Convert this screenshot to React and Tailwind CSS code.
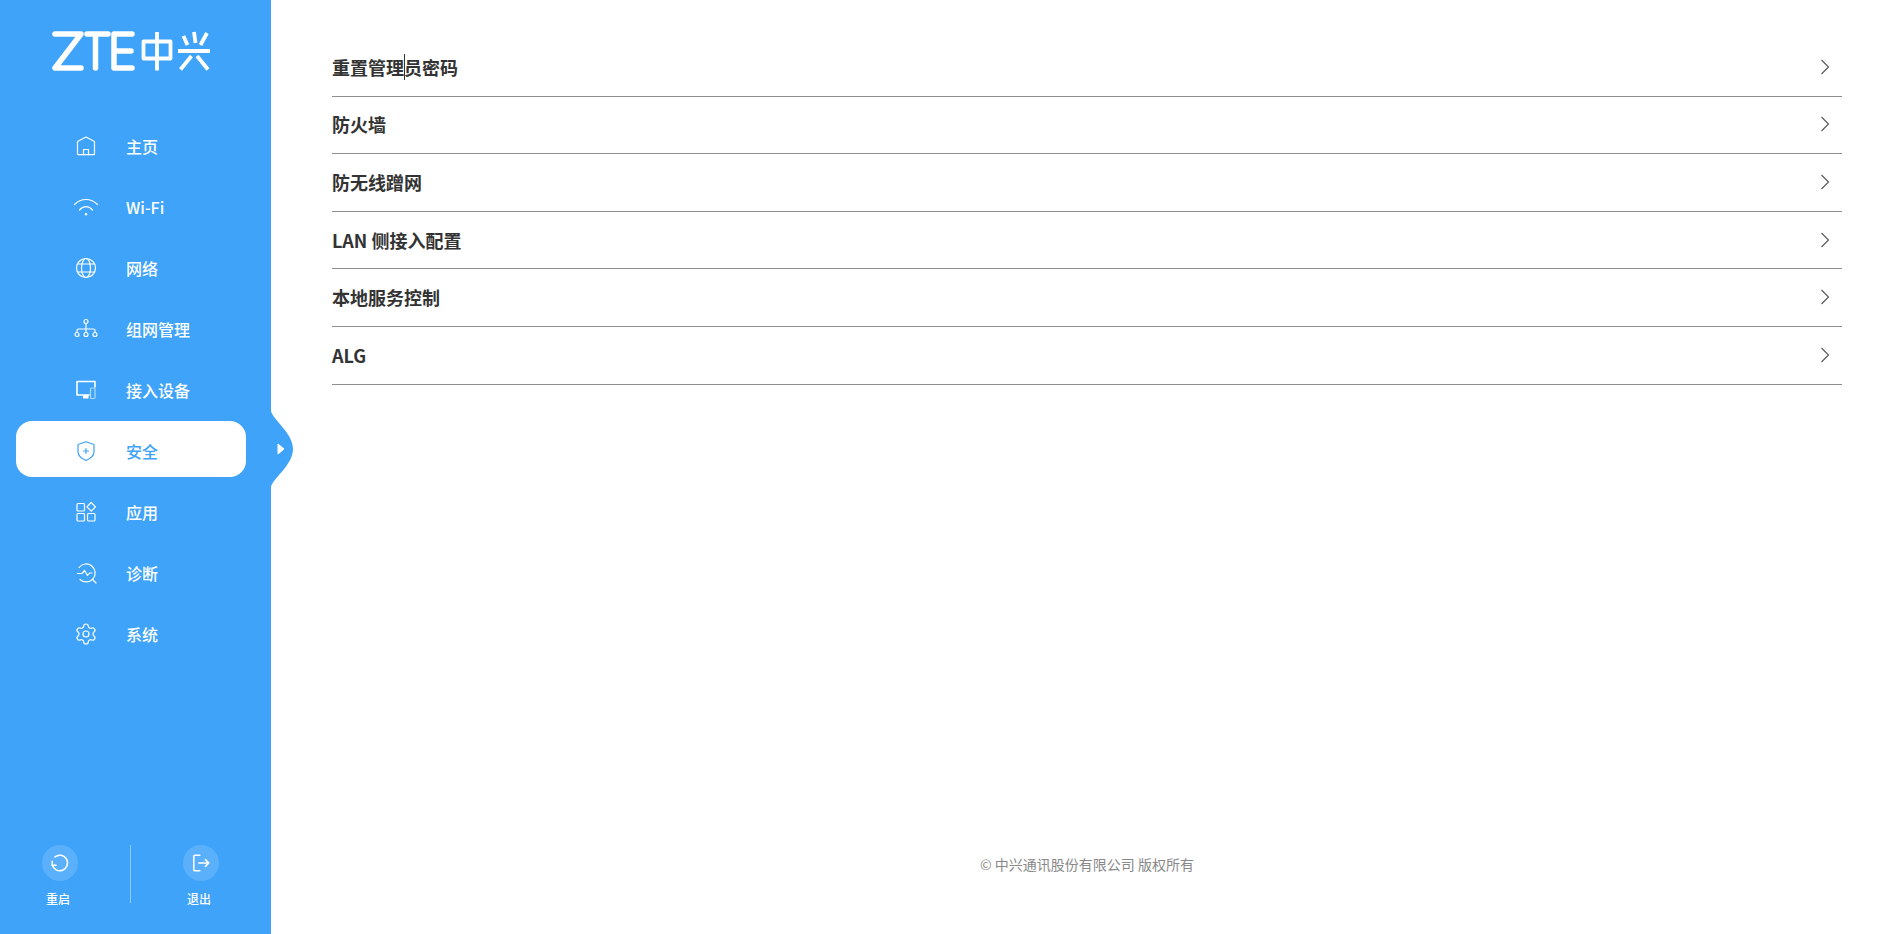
import React from 'react';
import { Settings } from 'lucide-react';

const FONT = "font-['Noto_Sans_CJK_SC','Noto_Sans',sans-serif]";

// nav icons, drawn on a 24 box
const Icon = ({ children, className = '' }) => (
    <svg width="24" height="24" viewBox="0 0 24 24" fill="none" stroke="currentColor" strokeWidth="1.2" strokeLinecap="round" strokeLinejoin="round" className={className}>
        {children}
    </svg>
);

const navItems = [
    {
        label: '主页',
        icon: (
            <Icon>
                <path d="M3.500 7.500 12 3l8.500 4.500v12.200a1 1 0 0 1-1 1h-15a1 1 0 0 1-1-1z" />
                <path d="M9.500 20.700v-5.200h5v5.200" />
            </Icon>
        ),
    },
    {
        label: 'Wi-Fi',
        icon: (
            <Icon>
                <path d="M.5 9.500C7 2.800 17 2.800 23.500 9.500" />
                <path d="M5.500 15c3.700-4.500 9.300-4.500 13 0" />
                <circle cx="12" cy="19.300" r="1.200" fill="currentColor" stroke="none" />
            </Icon>
        ),
    },
    {
        label: '网络',
        icon: (
            <Icon>
                <circle cx="12" cy="12" r="9.500" />
                <ellipse cx="12" cy="12" rx="4.500" ry="9.500" />
                <path d="M3.500 8h17M3.500 16h17" />
            </Icon>
        ),
    },
    {
        label: '组网管理',
        icon: (
            <Icon>
                <circle cx="12" cy="4.500" r="2" />
                <circle cx="3" cy="17.500" r="2" />
                <circle cx="12" cy="17.500" r="2" />
                <circle cx="21" cy="17.500" r="2" />
                <path d="M12 6.500v9M3 15.500v-2a1.500 1.500 0 0 1 1.500-1.500h15a1.500 1.500 0 0 1 1.500 1.500v2" />
            </Icon>
        ),
    },
    {
        label: '接入设备',
        icon: (
            <Icon>
                <path d="M15 17H3V3.500h18V9" strokeWidth="1.600" />
                <path d="M9 20.500h5.500V17H9z" fill="currentColor" stroke="none" />
                <rect x="16.500" y="10" width="4.500" height="10.500" rx="1" opacity="0.6" />
            </Icon>
        ),
    },
    {
        label: '安全',
        active: true,
        icon: (
            <Icon>
                <path d="M12 2.800 20 5.500v7.500c0 4-3.500 6.500-8 8.500-4.500-2-8-4.500-8-8.500V5.500z" />
                <path d="M12 9.500v5M9.500 12h5" />
            </Icon>
        ),
    },
    {
        label: '应用',
        icon: (
            <Icon>
                <rect x="3" y="3.500" width="7.500" height="7.500" rx="1" />
                <rect x="3" y="13.500" width="7.500" height="7.500" rx="1" />
                <rect x="13.500" y="13.500" width="7.500" height="7.500" rx="1" />
                <path d="M17.200 2.500 21.500 6.800 17.200 11.100 12.900 6.800z" />
            </Icon>
        ),
    },
    {
        label: '诊断',
        icon: (
            <Icon>
                <path d="M5 6.500A9 9 0 1 1 6 18.500" />
                <path d="M3.500 12.500H8l2.500-3 3 5 2-2.500h2.500" />
                <path d="m18.500 18.500 3.500 3.500" />
            </Icon>
        ),
    },
    {
        label: '系统',
        icon: <Settings size={24} strokeWidth={1.2} />,
    },
];

const rows = ['重置管理员密码', '防火墙', '防无线蹭网', 'LAN 侧接入配置', '本地服务控制', 'ALG'];

function Logo() {
    return (
        <svg width="162" height="46" viewBox="50 28 162 46" fill="none" stroke="white" strokeLinecap="round" strokeLinejoin="round">
            <path d="M55 34h26L55 68h26" strokeWidth="5.500" />
            <path d="M87 34h21M95.500 34v34" strokeWidth="5.500" />
            <path d="M132 34h-18v34h18M114 51h17" strokeWidth="5.500" />
            <path d="M143.500 41.500h27v17h-27zM157 32v38.500" strokeWidth="3.800" strokeLinecap="butt" />
            <path d="M178 51h32M183.500 36l4 9M194 32l1.500 11M207 33l-6.500 12M191.500 56l-11 13.500M197 56l11 13.500" strokeWidth="3.800" strokeLinecap="butt" />
        </svg>
    );
}

function NavItem({ item }) {
    return (
        <div className={`flex h-14 items-center pl-[46px] pt-1 rounded-2xl ${item.active ? 'bg-white text-[#3ea3f9]' : 'text-white'}`}>
            <span className="flex w-12 justify-center">{item.icon}</span>
            <span className="ml-4 text-base font-medium">{item.label}</span>
        </div>
    );
}

export default function App() {
    return (
        <div className={`flex h-screen w-full overflow-hidden bg-white ${FONT}`}>
            <aside className="relative flex w-[271px] shrink-0 flex-col bg-[#3ea3f9]">
                <div className="ml-[50px] mt-[28px] h-[46px]">
                    <Logo />
                </div>
                <nav className="ml-4 mt-[42px] flex w-[230px] flex-col gap-[5px]">
                    {navItems.map(item => (
                        <NavItem key={item.label} item={item} />
                    ))}
                </nav>
                <div className="mt-auto mb-[27px] flex items-start">
                    <div className="flex w-[130px] flex-col items-start">
                        <span className="ml-[42px] flex h-9 w-9 items-center justify-center rounded-full bg-white/15 text-white">
                            <svg width="20" height="20" viewBox="0 0 18 18" fill="none" stroke="currentColor" strokeWidth="1.400" strokeLinecap="round" strokeLinejoin="round">
                                <path d="M4.500 3.500A7 7 0 1 1 2 10.500" />
                                <path d="M2 7.500v3.500h3.500" />
                            </svg>
                        </span>
                        <span className="ml-[46px] mt-[10px] text-xs font-medium leading-[16px] text-white">重启</span>
                    </div>
                    <div className="h-[58px] w-px bg-white/40" />
                    <div className="flex flex-1 flex-col items-start">
                        <span className="ml-[52px] flex h-9 w-9 items-center justify-center rounded-full bg-white/15 text-white">
                            <svg width="20" height="20" viewBox="0 0 18 18" fill="none" stroke="currentColor" strokeWidth="1.400" strokeLinecap="round" strokeLinejoin="round">
                                <path d="M8 2H3.500a1 1 0 0 0-1 1v12a1 1 0 0 0 1 1H8" />
                                <path d="M7 9h9M13 6l3 3-3 3" />
                            </svg>
                        </span>
                        <span className="ml-[56px] mt-[10px] text-xs font-medium leading-[16px] text-white">退出</span>
                    </div>
                </div>
                {/* tab on the sidebar edge next to the active item */}
                <svg className="absolute left-[271px] top-[411px]" width="23" height="76" viewBox="0 0 23 76">
                    <path d="M0 0C2 9 22 22 22 38C22 54 2 67 0 76Z" fill="#3ea3f9" />
                    <path d="M7 33v10l6-5z" fill="white" stroke="white" strokeLinejoin="round" />
                </svg>
            </aside>
            <main className="flex min-w-0 flex-1 flex-col pl-[61px] pr-[55px] pt-[39px]">
                <div className="flex flex-col">
                    {rows.map((row, i) => (
                        <div key={row} className="flex h-[57.6px] items-center justify-between border-b border-[#8f8f8f] pb-[1px] text-lg font-semibold text-[#333]">
                            <span className="relative">
                                {row}
                                {i === 0 && <span className="absolute left-[72px] top-[1px] h-[26px] w-px bg-[#333]" />}
                            </span>
                            <svg className="mr-[12px] text-[#555]" width="10" height="16" viewBox="0 0 10 16" fill="none" stroke="currentColor" strokeWidth="1.100">
                                <path d="M1.500 1 8.500 8l-7 7" />
                            </svg>
                        </div>
                    ))}
                </div>
                <p className="mt-auto mb-[60px] text-center text-sm leading-[20px] text-[#888]">© 中兴通讯股份有限公司 版权所有</p>
            </main>
        </div>
    );
}
